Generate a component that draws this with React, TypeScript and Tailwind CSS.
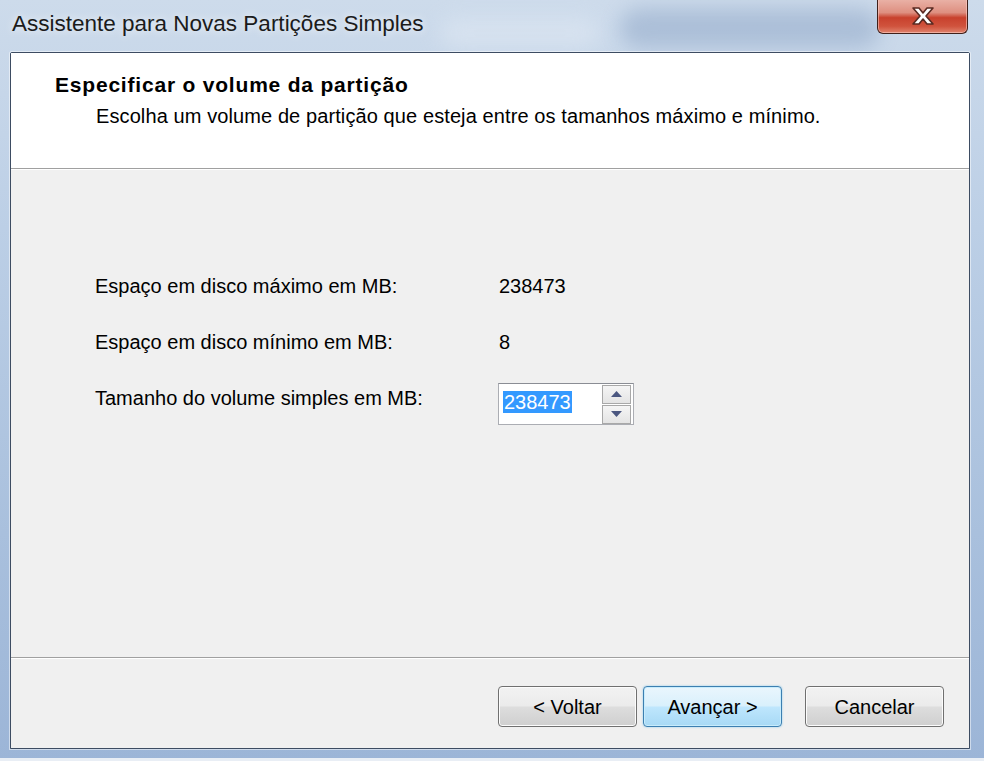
import React from 'react';

const font = { fontFamily: '"Liberation Sans", Arial, sans-serif' };

function CloseButton() {
  return (
    <div className="relative mt-[-1px] mr-[16px] h-[35px] w-[91px] rounded-b-[6px] border border-t-0 border-[#40201a] bg-[linear-gradient(180deg,#eab3a8_0%,#de8f80_40%,#c8412d_55%,#d0533d_80%,#e0846e_100%)] shadow-[inset_0_0_0_1px_rgba(255,210,200,0.55)] flex items-center justify-center">
      <svg width="30" height="22" viewBox="0 0 30 22">
        <path
          d="M5 3 L11 3 L15 8 L19 3 L25 3 L18 11 L25 19 L19 19 L15 14 L11 19 L5 19 L12 11 Z"
          fill="#ffffff"
          stroke="#5a2a22"
          strokeWidth="1.6"
          strokeLinejoin="round"
        />
      </svg>
    </div>
  );
}

function WinButton({ label, primary }: { label: string; primary?: boolean }) {
  const base =
    'h-[41px] w-[139px] rounded-[4px] border text-[20px] text-black flex items-center justify-center';
  const skin = primary
    ? 'border-[#3c7fb1] bg-[linear-gradient(180deg,#eaf6fd_0%,#d9f0fc_48%,#bee6fd_52%,#a7d9f5_100%)] shadow-[inset_0_0_0_1px_#c8ecfc,0_0_2px_#7fc4ea]'
    : 'border-[#707070] bg-[linear-gradient(180deg,#f2f2f2_0%,#ebebeb_48%,#dddddd_52%,#cfcfcf_100%)] shadow-[inset_0_0_0_1px_#fcfcfc]';
  return (
    <button className={`${base} ${skin}`} style={font}>
      {label}
    </button>
  );
}

function SpinBox({ value }: { value: string }) {
  return (
    <div className="flex h-[42px] w-[136px] items-center border border-[#abadb3] border-t-[#8a8d94] bg-white pl-[4px] pr-[2px]">
      <div className="flex-1 pb-[4px]">
        <span className="bg-[#3399ff] px-[1px] text-[20px] leading-[24px] text-white" style={font}>
          {value}
        </span>
      </div>
      <div className="flex flex-col gap-[1px]">
        <div className="flex h-[19px] w-[29px] items-center justify-center border border-[#a8a8a8] bg-[linear-gradient(180deg,#f5f5f5,#e4e4e4)]">
          <svg width="11" height="6" viewBox="0 0 11 6">
            <path d="M0 6 L5.5 0 L11 6 Z" fill="#4b5780" />
          </svg>
        </div>
        <div className="flex h-[19px] w-[29px] items-center justify-center border border-[#a8a8a8] bg-[linear-gradient(180deg,#f5f5f5,#e4e4e4)]">
          <svg width="11" height="6" viewBox="0 0 11 6">
            <path d="M0 0 L11 0 L5.5 6 Z" fill="#4b5780" />
          </svg>
        </div>
      </div>
    </div>
  );
}

export default function App() {
  return (
    <div
      className="relative flex h-[761px] w-[984px] flex-col overflow-hidden bg-[linear-gradient(180deg,#cddbeb_0%,#bccfe6_30%,#a9c0dd_70%,#9cb5d7_100%)]"
      style={font}
    >
      {/* blurred glass streaks */}
      <div className="pointer-events-none absolute left-[620px] top-[8px] h-[40px] w-[260px] rounded-full bg-[#7e98bd] opacity-40 blur-[10px]" />
      <div className="pointer-events-none absolute left-[440px] top-[18px] h-[30px] w-[160px] rounded-full bg-[#dfe8f3] opacity-60 blur-[10px]" />
      <div className="pointer-events-none absolute bottom-0 left-0 h-[3px] w-full bg-[#e9eef5]" />

      {/* title bar */}
      <div className="relative flex h-[52px] shrink-0 items-start justify-between">
        <div className="pl-[12px] pt-[10px] text-[22.5px] leading-[28px] text-[#1b1b1b] [text-shadow:0_0_8px_rgba(255,255,255,0.9)]">
          Assistente para Novas Partições Simples
        </div>
        <CloseButton />
      </div>

      {/* client area */}
      <div className="relative mb-[12px] ml-[10px] mr-[14px] flex flex-1 flex-col rounded-t-[2px] border border-[#3d4c62] shadow-[0_0_0_1px_rgba(255,255,255,0.5)]">
        <div className="h-[115px] shrink-0 bg-white pl-[44px] pt-[20px] text-black">
          <div className="text-[21px] font-bold leading-[24px] tracking-[0.8px]">
            Especificar o volume da partição
          </div>
          <div className="pl-[41px] pt-[7px] text-[20px] leading-[24px] tracking-[0.1px]">
            Escolha um volume de partição que esteja entre os tamanhos máximo e mínimo.
          </div>
        </div>
        <div className="h-[1px] shrink-0 bg-[#a0a0a0]" />
        <div className="h-[1px] shrink-0 bg-white" />

        <div className="flex flex-1 flex-col bg-[#f0f0f0] pl-[84px] pt-[88px] text-[20px] text-black">
          <div className="flex h-[56px] items-center">
            <div className="w-[404px]">Espaço em disco máximo em MB:</div>
            <div>238473</div>
          </div>
          <div className="flex h-[56px] items-center">
            <div className="w-[404px]">Espaço em disco mínimo em MB:</div>
            <div>8</div>
          </div>
          <div className="flex h-[56px] items-start">
            <div className="w-[403px] leading-[56px]">Tamanho do volume simples em MB:</div>
            <div className="pt-[13px]">
              <SpinBox value="238473" />
            </div>
          </div>
        </div>

        <div className="h-[1px] shrink-0 bg-[#a0a0a0]" />
        <div className="h-[1px] shrink-0 bg-white" />
        <div className="flex h-[89px] shrink-0 items-start bg-[#f0f0f0] pl-[487px] pt-[27px]">
          <WinButton label="< Voltar" />
          <div className="w-[6px]" />
          <WinButton label="Avançar >" primary />
          <div className="w-[23px]" />
          <WinButton label="Cancelar" />
        </div>
      </div>
    </div>
  );
}
